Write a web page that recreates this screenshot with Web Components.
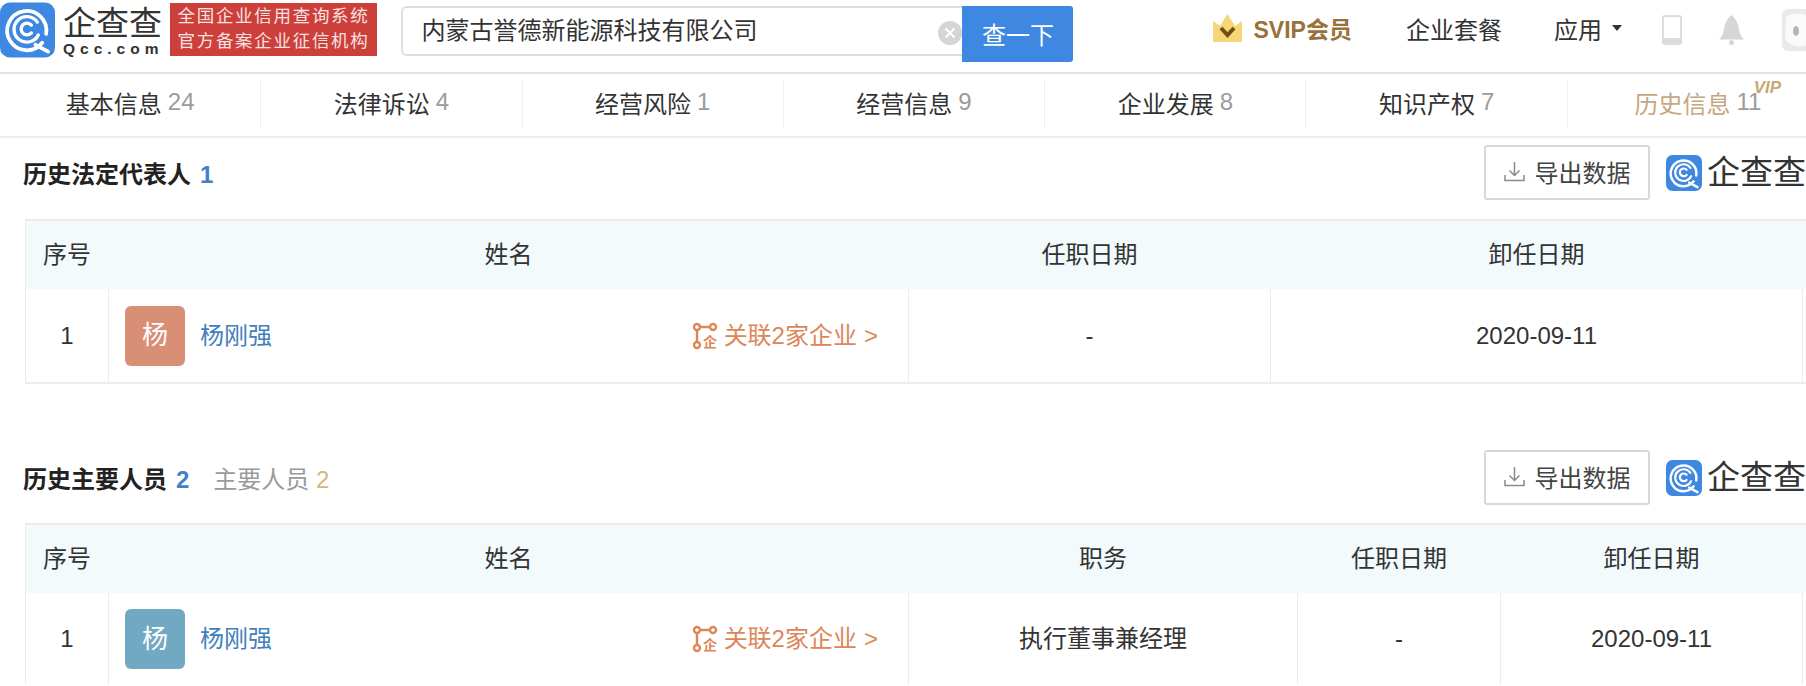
<!DOCTYPE html>
<html lang="zh">
<head>
<meta charset="utf-8">
<title>历史信息</title>
<style>
    html, body {
        margin: 0;
        background: #fff;
        overflow: hidden;
    }
    body {
        width: 1806px;
        height: 686px;
        font-family: "Liberation Sans", "Noto Sans CJK SC", sans-serif;
        color: #333;
    }
</style>
</head>
<body>
    <qcc-header></qcc-header>
    <qcc-tabs>
        <qcc-tab label="基本信息" count="24"></qcc-tab>
        <qcc-tab label="法律诉讼" count="4"></qcc-tab>
        <qcc-tab label="经营风险" count="1"></qcc-tab>
        <qcc-tab label="经营信息" count="9"></qcc-tab>
        <qcc-tab label="企业发展" count="8"></qcc-tab>
        <qcc-tab label="知识产权" count="7"></qcc-tab>
        <qcc-tab label="历史信息" count="11" vip></qcc-tab>
    </qcc-tabs>

    <qcc-section heading="历史法定代表人" count="1">
        <qcc-row cols="83px 800px 362px 532px" head>
            <qcc-cell>序号</qcc-cell><qcc-cell>姓名</qcc-cell><qcc-cell>任职日期</qcc-cell><qcc-cell>卸任日期</qcc-cell>
        </qcc-row>
        <qcc-row cols="83px 800px 362px 532px" last>
            <qcc-cell num>1</qcc-cell>
            <qcc-person name="杨刚强" color="#d98f76"></qcc-person>
            <qcc-cell num>-</qcc-cell>
            <qcc-cell num>2020-09-11</qcc-cell>
        </qcc-row>
    </qcc-section>

    <qcc-section heading="历史主要人员" count="2" sub="主要人员" subcount="2" second>
        <qcc-row cols="83px 800px 389px 203px 302px" head>
            <qcc-cell>序号</qcc-cell><qcc-cell>姓名</qcc-cell><qcc-cell>职务</qcc-cell><qcc-cell>任职日期</qcc-cell><qcc-cell>卸任日期</qcc-cell>
        </qcc-row>
        <qcc-row cols="83px 800px 389px 203px 302px">
            <qcc-cell num>1</qcc-cell>
            <qcc-person name="杨刚强" color="#71a9c3"></qcc-person>
            <qcc-cell>执行董事兼经理</qcc-cell>
            <qcc-cell num>-</qcc-cell>
            <qcc-cell num>2020-09-11</qcc-cell>
        </qcc-row>
    </qcc-section>

<script>
// shared logo mark, used in the header and in each section head
const LOGO_MARK = `
    <svg viewBox="0 0 56 56" width="100%" height="100%" aria-hidden="true">
        <rect width="56" height="56" rx="10" fill="#3f88e2"/>
        <g fill="none" stroke="#fff" stroke-linecap="round">
            <path d="M43 41A20 20 0 1 1 47 32" stroke-width="3.8"/>
            <path d="M36 43L49 50" stroke-width="3.8"/>
            <path d="M39 33A13 13 0 1 1 38 20" stroke-width="3.400"/>
            <path d="M32 31A6 6 0 1 1 32 23" stroke-width="3.400"/>
        </g>
    </svg>`;

class QccLogo extends HTMLElement {
    constructor() {
        super();
        this.attachShadow({ mode: 'open' });
        this.shadowRoot.innerHTML = `
            <style>
                :host {
                    display: flex;
                    align-items: center;
                    flex: none;
                    gap: 8px;
                }
                .mark {
                    width: 55px;
                    height: 56px;
                    flex: none;
                }
                .words {
                    display: flex;
                    flex-direction: column;
                }
                .cn {
                    font-family: "Noto Sans CJK SC", sans-serif;
                    font-size: 33px;
                    line-height: 36px;
                    color: #333;
                    white-space: nowrap;
                }
                .en {
                    font-size: 15.5px;
                    line-height: 16px;
                    margin-top: 2px;
                    font-weight: bold;
                    letter-spacing: 5px;
                    color: #333;
                }
            </style>
            <div class="mark">${LOGO_MARK}</div>
            <div class="words">
                <div class="cn">企查查</div>
                <div class="en">Qcc.com</div>
            </div>
        `;
    }
}
customElements.define('qcc-logo', QccLogo);

class QccMiniLogo extends HTMLElement {
    constructor() {
        super();
        this.attachShadow({ mode: 'open' });
        this.shadowRoot.innerHTML = `
            <style>
                :host {
                    display: flex;
                    align-items: center;
                    flex: none;
                    gap: 5px;
                }
                .mark {
                    width: 36px;
                    height: 36px;
                    flex: none;
                }
                .cn {
                    font-family: "Noto Sans CJK SC", sans-serif;
                    font-size: 33px;
                    line-height: 36px;
                    padding-bottom: 6px;
                    color: #333;
                    white-space: nowrap;
                }
            </style>
            <div class="mark">${LOGO_MARK}</div>
            <div class="cn">企查查</div>
        `;
    }
}
customElements.define('qcc-mini-logo', QccMiniLogo);

class QccHeader extends HTMLElement {
    constructor() {
        super();
        this.attachShadow({ mode: 'open' });
        this.shadowRoot.innerHTML = `
            <style>
                :host {
                    display: flex;
                    align-items: center;
                    box-sizing: border-box;
                    height: 74px;
                    padding: 0 0 16px 0;
                    border-bottom: 2px solid #e3e3e3;
                    font-size: 24px;
                    color: #333;
                }
                qcc-logo {
                    align-self: flex-start;
                    margin-top: 2px;
                }
                .badge {
                    flex: none;
                    align-self: flex-start;
                    box-sizing: border-box;
                    width: 207px;
                    height: 53px;
                    margin: 3px 0 0 7px;
                    padding: 1px 0 0 7px;
                    background: #cd3f3b;
                    color: #f6e3e0;
                    font-size: 17.5px;
                    line-height: 25px;
                    letter-spacing: 1.7px;
                    white-space: nowrap;
                }
                .search {
                    flex: none;
                    align-self: flex-start;
                    display: flex;
                    margin: 6px 0 0 24px;
                    height: 56px;
                }
                .input {
                    position: relative;
                    display: flex;
                    align-items: center;
                    box-sizing: border-box;
                    width: 561px;
                    height: 50px;
                    padding: 0 0 5px 18px;
                    border: 2px solid #dedede;
                    border-right: 0;
                    border-radius: 6px 0 0 6px;
                }
                .clear {
                    position: absolute;
                    right: 0;
                    top: 13px;
                    width: 24px;
                    height: 24px;
                }
                .go {
                    width: 111px;
                    display: flex;
                    align-items: center;
                    justify-content: center;
                    padding-bottom: 2px;
                    box-sizing: border-box;
                    background: #3f88e2;
                    color: #fff;
                    border-radius: 0 3px 3px 0;
                }
                .vip {
                    flex: none;
                    display: flex;
                    align-items: center;
                    gap: 11px;
                    margin-left: 140px;
                    font-weight: bold;
                    font-size: 23px;
                    color: #9a7138;
                }
                .plan {
                    flex: none;
                    margin-left: 54px;
                }
                .apps {
                    flex: none;
                    display: flex;
                    align-items: center;
                    gap: 10px;
                    margin-left: 52px;
                }
                .caret {
                    width: 0;
                    height: 0;
                    border: 5px solid transparent;
                    border-top: 6px solid #333;
                    border-bottom: 0;
                }
                .phone { margin: 3px 0 0 40px; flex: none; }
                .bell { margin: 3px 0 0 37px; flex: none; }
                .me { margin: 3px 0 0 38px; flex: none; }
            </style>
            <qcc-logo></qcc-logo>
            <div class="badge">全国企业信用查询系统<br>官方备案企业征信机构</div>
            <div class="search">
                <div class="input">内蒙古誉德新能源科技有限公司
                    <svg class="clear" viewBox="0 0 24 24">
                        <circle cx="12" cy="12" r="12" fill="#d5d5d5"/>
                        <path d="M7.5 7.5L16.5 16.5M16.5 7.5L7.5 16.5" stroke="#fff" stroke-width="2"/>
                    </svg>
                </div>
                <div class="go">查一下</div>
            </div>
            <div class="vip">
                <svg width="29" height="28" viewBox="0 0 29 28">
                    <path d="M0 7L7 12L14.5 0L22 12L29 7V28H0Z" fill="#f5d777"/>
                    <path d="M8 14L14.5 21L21 14" fill="none" stroke="#6f4f16" stroke-width="4"/>
                </svg>
                <span>SVIP会员</span>
            </div>
            <div class="plan">企业套餐</div>
            <div class="apps">应用<span class="caret"></span></div>
            <svg class="phone" width="20" height="30" viewBox="0 0 20 30">
                <rect x="1" y="1" width="18" height="28" rx="2" fill="none" stroke="#dcdcdc" stroke-width="2"/>
                <rect x="1" y="23" width="18" height="6" fill="#dcdcdc"/>
            </svg>
            <svg class="bell" width="25" height="31" viewBox="0 0 25 31">
                <path d="M12.5 1C17 5 19 9 20 15C20.5 19 22 23 25 25.500H0C3 23 4.500 19 5 15C6 9 8 5 12.5 1Z" fill="#d6d6d6"/>
                <circle cx="12.500" cy="28.500" r="2.500" fill="#d6d6d6"/>
            </svg>
            <svg class="me" width="30" height="42" viewBox="0 0 30 42">
                <rect width="30" height="42" rx="6" fill="#e9e9e9"/>
                <path d="M4 8C12 2 24 4 30 10V34C20 40 8 38 3 30Z" fill="#fafafa"/>
                <ellipse cx="14" cy="22" rx="3" ry="5" fill="#b5b5b5"/>
            </svg>
        `;
    }
}
customElements.define('qcc-header', QccHeader);

class QccTabs extends HTMLElement {
    constructor() {
        super();
        this.attachShadow({ mode: 'open' });
        this.shadowRoot.innerHTML = `
            <style>
                :host {
                    display: grid;
                    grid-template-columns: repeat(7, 261.3px);
                    align-content: start;
                    box-sizing: border-box;
                    width: 1830px;
                    height: 64px;
                    padding-top: 6px;
                    border-bottom: 2px solid #ededed;
                }
            </style>
            <slot></slot>
        `;
    }
}
customElements.define('qcc-tabs', QccTabs);

class QccTab extends HTMLElement {
    constructor() {
        super();
        this.attachShadow({ mode: 'open' });
        var vip = this.hasAttribute('vip');
        this.shadowRoot.innerHTML = `
            <style>
                :host {
                    display: flex;
                    align-items: center;
                    justify-content: center;
                    gap: 6px;
                    box-sizing: border-box;
                    height: 48px;
                    padding-bottom: 4px;
                    border-right: 1px solid #efefef;
                    font-size: 24px;
                    color: ${vip ? '#c5a87f' : '#333'};
                    position: relative;
                }
                .num { color: #9b9b9b; }
                .tag {
                    position: absolute;
                    left: 186px;
                    top: 1px;
                    font-size: 17px;
                    line-height: 14px;
                    font-style: italic;
                    font-weight: bold;
                    color: #c8a971;
                }
            </style>
            <span>${this.getAttribute('label')}</span>
            <span class="num">${this.getAttribute('count')}</span>
            ${vip ? '<span class="tag">VIP</span>' : ''}
        `;
    }
}
customElements.define('qcc-tab', QccTab);

class QccSection extends HTMLElement {
    constructor() {
        super();
        this.attachShadow({ mode: 'open' });
        var sub = this.getAttribute('sub');
        var second = this.hasAttribute('second');
        this.shadowRoot.innerHTML = `
            <style>
                :host {
                    display: block;
                    padding-left: 25px;
                    margin-top: ${second ? '66px' : '7px'};
                }
                .head {
                    display: flex;
                    align-items: center;
                    justify-content: space-between;
                    height: 55px;
                    margin-bottom: ${second ? '18px' : '19px'};
                }
                .title {
                    display: flex;
                    align-items: baseline;
                    margin: 0 0 1px -2px;
                    font-size: 24px;
                    font-weight: bold;
                    color: #222;
                }
                .title b { color: #3f82c8; margin-left: 9px; }
                .sub {
                    font-weight: normal;
                    color: #9a9a9a;
                    margin-left: 24px;
                }
                .sub i { font-style: normal; color: #d2b77f; margin-left: 0; }
                .tools {
                    display: flex;
                    align-items: center;
                    gap: 16px;
                }
                .export {
                    display: flex;
                    align-items: center;
                    justify-content: center;
                    gap: 10px;
                    box-sizing: border-box;
                    width: 166px;
                    height: 55px;
                    padding-bottom: 3px;
                    border: 2px solid #d8d8d8;
                    border-radius: 3px;
                    font-size: 24px;
                    color: #444;
                }
                .table {
                    border-left: 1px solid #ececec;
                }
            </style>
            <div class="head">
                <div class="title"><span>${this.getAttribute('heading')}</span><b>${this.getAttribute('count')}</b>${
                    sub ? `<span class="sub">${sub} <i>${this.getAttribute('subcount')}</i></span>` : ''
                }</div>
                <div class="tools">
                    <div class="export">
                        <svg width="21" height="21" viewBox="0 0 21 21" fill="none" stroke="#8a8a8a" stroke-width="1.500">
                            <path d="M10.500 1V14M5.500 9.500L10.500 14.500L15.500 9.500M1 14V19.500H20V14"/>
                        </svg>
                        <span>导出数据</span>
                    </div>
                    <qcc-mini-logo></qcc-mini-logo>
                </div>
            </div>
            <div class="table"><slot></slot></div>
        `;
    }
}
customElements.define('qcc-section', QccSection);

class QccRow extends HTMLElement {
    constructor() {
        super();
        this.attachShadow({ mode: 'open' });
        var head = this.hasAttribute('head');
        this.shadowRoot.innerHTML = `
            <style>
                :host {
                    display: grid;
                    grid-template-columns: ${this.getAttribute('cols')};
                    box-sizing: border-box;
                    height: ${head ? '70px' : (this.hasAttribute('last') ? '95px' : '92px')};
                    background: ${head ? '#f2fafc' : '#fff'};
                    border-top: ${head ? '2px solid #ececec' : '0'};
                    border-bottom: ${this.hasAttribute('last') ? '2px solid #ececec' : '0'};
                    --cell-line: ${head ? 'transparent' : '#ececec'};
                }
            </style>
            <slot></slot>
        `;
    }
}
customElements.define('qcc-row', QccRow);

class QccCell extends HTMLElement {
    constructor() {
        super();
        this.attachShadow({ mode: 'open' });
        // Chinese glyphs sit low in the Latin line box, digits don't
        this.shadowRoot.innerHTML = `
            <style>
                :host {
                    display: flex;
                    align-items: center;
                    justify-content: center;
                    box-sizing: border-box;
                    padding-bottom: ${this.hasAttribute('num') ? '0' : '5px'};
                    border-right: 1px solid var(--cell-line);
                    font-size: 24px;
                    color: #333;
                    white-space: nowrap;
                }
            </style>
            <slot></slot>
        `;
    }
}
customElements.define('qcc-cell', QccCell);

class QccPerson extends HTMLElement {
    constructor() {
        super();
        this.attachShadow({ mode: 'open' });
        var name = this.getAttribute('name');
        this.shadowRoot.innerHTML = `
            <style>
                :host {
                    display: flex;
                    align-items: center;
                    box-sizing: border-box;
                    padding: 0 30px 0 16px;
                    border-right: 1px solid var(--cell-line);
                    font-size: 24px;
                    white-space: nowrap;
                }
                .avatar {
                    display: flex;
                    align-items: center;
                    justify-content: center;
                    flex: none;
                    box-sizing: border-box;
                    width: 60px;
                    height: 60px;
                    padding-bottom: 6px;
                    border-radius: 6px;
                    background: ${this.getAttribute('color')};
                    color: #fff;
                    font-size: 26px;
                }
                .name {
                    margin-left: 15px;
                    padding-bottom: 5px;
                    color: #3f80bb;
                }
                .rel {
                    display: flex;
                    align-items: center;
                    gap: 6px;
                    margin-left: auto;
                    padding-bottom: 5px;
                    color: #dd8658;
                }
                .rel svg { overflow: visible; margin-top: 5px; }
                .rel i {
                    font-style: normal;
                    margin-left: 7px;
                }
            </style>
            <div class="avatar">${name.charAt(0)}</div>
            <div class="name">${name}</div>
            <div class="rel">
                <svg width="25" height="26" viewBox="0 0 25 26" fill="none" stroke="#dd8658" stroke-width="2.400">
                    <circle cx="4" cy="4" r="3"/>
                    <circle cx="20" cy="4" r="3"/>
                    <circle cx="4" cy="22" r="3"/>
                    <path d="M7 4H17M4 7V19"/>
                    <text x="10" y="24" font-size="14" font-weight="bold" fill="#dd8658" stroke="none" font-family="Noto Sans CJK SC">企</text>
                </svg>
                <span>关联2家企业<i>&gt;</i></span>
            </div>
        `;
    }
}
customElements.define('qcc-person', QccPerson);
</script>
</body>
</html>
